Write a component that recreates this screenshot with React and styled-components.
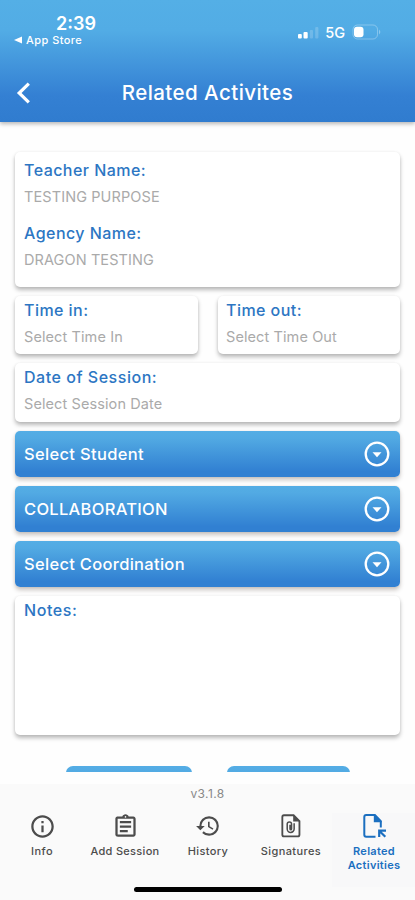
import React from "react";
import styled, { createGlobalStyle } from "styled-components";
import { MdInfoOutline, MdOutlineAssignment, MdHistory } from "react-icons/md";

const GlobalStyle = createGlobalStyle`
  * { box-sizing: border-box; }
  body { margin: 0; background: #fefefe; font-family: Inter, Roboto, sans-serif; }
`;

const blue = "linear-gradient(180deg, #54ade5 0%, #52aae3 15%, #3180d2 88%, #3180d2 100%)";

const Screen = styled.div`
  width: 415px;
  height: 900px;
  display: flex;
  flex-direction: column;
  overflow: hidden;
`;

const Header = styled.header`
  height: 122px;
  flex: none;
  color: #fff;
  background: linear-gradient(180deg, #54afe6 0%, #52ace5 25%, #3480d3 78%, #307ccf 100%);
  box-shadow: 0 2px 4px rgba(0, 0, 0, 0.28);
`;

const StatusBar = styled.div`
  height: 63px;
  display: flex;
  justify-content: space-between;
  padding: 14px 33px 0 14px;
`;

const ClockBlock = styled.div`
  width: 84px;
`;

const Clock = styled.div`
  padding-left: 42px;
  font-size: 18px;
  line-height: 20px;
  font-weight: 600;
`;

const BackToApp = styled.div`
  display: flex;
  align-items: center;
  gap: 4px;
  white-space: nowrap;
  font-size: 11px;
  line-height: 12px;
  font-weight: 500;
  letter-spacing: 0.45px;
`;

const Signals = styled.div`
  display: flex;
  align-items: center;
  height: 18px;
  margin-top: 9px;
`;

const Network = styled.span`
  font-size: 14.5px;
  font-weight: 500;
  margin: 0 7px 0 5px;
`;

const TitleBar = styled.div`
  height: 59px;
  display: grid;
  grid-template-columns: 48px 1fr 48px;
  align-items: center;
`;

const BackButton = styled.button`
  border: 0;
  background: none;
  padding: 0 0 0 15px;
  height: 24px;
  color: inherit;
  text-align: left;
`;

const Title = styled.h1`
  margin: 0;
  text-align: center;
  font-size: 20.5px;
  line-height: 26px;
  font-weight: 500;
  letter-spacing: 0.45px;
  white-space: nowrap;
`;

const Form = styled.main`
  flex: none;
  height: 650px;
  padding: 30px 15px 0;
  display: flex;
  flex-direction: column;
  gap: 9px;
  overflow: hidden;
`;

const Card = styled.section`
  flex: none;
  height: ${(p) => p.$height}px;
  padding: ${(p) => p.$top || 4}px 9px 0 ${(p) => p.$left || 9}px;
  border-radius: 5px;
  background: #fff;
  box-shadow: 0 3px 4px rgba(0, 0, 0, 0.27), 0 0 3px rgba(0, 0, 0, 0.06);
`;

const Pair = styled.div`
  display: grid;
  grid-template-columns: 183px 182px;
  justify-content: space-between;
`;

const FieldBox = styled.div`
  display: flex;
  flex-direction: column;
  gap: 7px;
  margin-bottom: 16px;
  white-space: nowrap;
`;

const Label = styled.div`
  color: #2c76c3;
  font-size: 16px;
  line-height: 20px;
  font-weight: 500;
  letter-spacing: ${(p) => p.$track || 0.45}px;
`;

const Value = styled.div`
  color: #aaa;
  font-size: 14.5px;
  line-height: 20px;
  letter-spacing: 0.1px;
`;

const SelectBar = styled.button`
  flex: none;
  height: 46px;
  border: 0;
  border-radius: 5px;
  padding: 0 10px 0 9px;
  display: flex;
  align-items: center;
  justify-content: space-between;
  background: ${blue};
  color: #fff;
  font: 500 16.5px/22px Inter, sans-serif;
  letter-spacing: ${(p) => p.$track}px;
  box-shadow: 0 3px 4px rgba(70, 50, 40, 0.28), 0 0 2px rgba(0, 0, 0, 0.1);
`;

const Actions = styled.div`
  display: flex;
  flex: none;
  gap: 35px;
  padding: 22px 0 0 51px;
`;

const Action = styled.button`
  flex: none;
  width: ${(p) => p.$width}px;
  height: 44px;
  border: 0;
  border-radius: 7px;
  background: ${blue};
`;

const Footer = styled.footer`
  margin-top: 12px;
  height: 116px;
  background: #fafafa;
  display: flex;
  flex-direction: column;
  align-items: center;
`;

const Version = styled.div`
  height: 29px;
  padding-top: 2px;
  color: #888;
  font-size: 12px;
  line-height: 16px;
  letter-spacing: 0.4px;
`;

const Tabs = styled.nav`
  display: grid;
  grid-template-columns: repeat(5, 83px);
  height: 74px;
`;

const Tab = styled.a`
  display: flex;
  flex-direction: column;
  align-items: center;
  padding-left: 1px;
  color: ${(p) => (p.$active ? "#1b6fc0" : "#4c4c4c")};
  background: ${(p) => (p.$active ? "#f8f8f9" : "transparent")};
  font-size: 11px;
  line-height: 14px;
  font-weight: ${(p) => (p.$active ? 600 : 500)};
  letter-spacing: ${(p) => p.$track}px;
  text-align: center;
`;

const TabIcon = styled.span`
  display: flex;
  align-items: center;
  height: 26px;
  margin-bottom: 5px;
`;

const HomeIndicator = styled.div`
  width: 148px;
  height: 5px;
  border-radius: 3px;
  background: #000;
`;

const ChevronIcon = () => (
  <svg width="18" height="24" viewBox="0 0 18 24" fill="none">
    <path d="M13.8 2.7 4.200 12l9.600 9.300" stroke="#fff" strokeWidth="3.2" />
  </svg>
);

const SignalIcon = () => (
  <svg width="22" height="13" viewBox="0 0 22 13" fill="#fff">
    <rect x="0" y="8" width="3.8" height="4.5" rx="1" />
    <rect x="5.5" y="6" width="4.2" height="6.5" rx="1" />
    <rect x="11.8" y="4" width="3.2" height="8.5" rx="1" opacity="0.18" />
    <rect x="17.2" y="1" width="3.2" height="11.5" rx="1" opacity="0.18" />
  </svg>
);

const BatteryIcon = () => (
  <svg width="30" height="16" viewBox="0 0 30 16">
    <rect x="1" y="1" width="24.5" height="14" rx="4.5" fill="none" stroke="#fff" strokeOpacity="0.3" />
    <rect x="2" y="2.8" width="9.5" height="10.4" rx="3" fill="#fff" />
    <path d="M27 5.5q2.6 2.5 0 5z" fill="#fff" opacity="0.35" />
  </svg>
);

const DropIcon = () => (
  <svg width="26" height="26" viewBox="0 0 26 26">
    <circle cx="13" cy="13" r="11.3" fill="none" stroke="#fff" strokeWidth="2.3" />
    <path d="M8.5 11.2h9L13 16.2z" fill="#fff" />
  </svg>
);

const SignatureIcon = () => (
  <svg width="26" height="26" viewBox="0 0 24 24" fill="none" stroke="currentColor" strokeWidth="1.7">
    <path d="M5.5 2.1h8.9l5.4 5.4v12.6q0 1.5-1.5 1.5H5.5Q4 21.6 4 20.1V3.6Q4 2.1 5.5 2.1z" />
    <path d="M14 2.2 19.6 7.9H14z" fill="currentColor" stroke="none" />
    <path d="M14.900 9.500v5.200a3.200 3.200 0 0 1-6.400 0V10.200a2 2 0 0 1 4 0v4.600q0 .7-.7.700t-.7-.7v-4" strokeWidth="1.4" />
  </svg>
);

const RelatedIcon = () => (
  <svg width="26" height="26" viewBox="0 0 26 26" fill="none" stroke="currentColor">
    <path d="M14.500 23.700H5.200q-1.900 0-1.900-1.900V4q0-1.900 1.900-1.900h8.700l5.900 6v6.300" strokeWidth="2" />
    <path d="M12.800 2v7.200h7.900v-.8L14.300 2z" fill="currentColor" stroke="none" />
    <path d="M18.200 24v-6.300H25M18.700 18.200l5.600 5.500" strokeWidth="2.2" />
  </svg>
);

const Field = ({ label, value, labelTrack }) => (
  <FieldBox>
    <Label $track={labelTrack}>{label}</Label>
    {value && <Value>{value}</Value>}
  </FieldBox>
);

const selects = [
  ["Select Student", 0.33],
  ["COLLABORATION", 0.3],
  ["Select Coordination", 0.3],
];

const tabs = [
  ["Info", MdInfoOutline, 0.5, 27],
  ["Add Session", MdOutlineAssignment, 0.3, 27],
  ["History", MdHistory, 0.4, 26],
  ["Signatures", SignatureIcon, 0.4, 26],
];

export default function App() {
  return (
    <Screen>
      <GlobalStyle />
      <Header>
        <StatusBar>
          <ClockBlock>
            <Clock>2:39</Clock>
            <BackToApp>
              <svg width="8" height="8" viewBox="0 0 8 8">
                <path d="M8 .5v7L0 4z" fill="#fff" />
              </svg>
              App Store
            </BackToApp>
          </ClockBlock>
          <Signals>
            <SignalIcon />
            <Network>5G</Network>
            <BatteryIcon />
          </Signals>
        </StatusBar>
        <TitleBar>
          <BackButton aria-label="Back"><ChevronIcon /></BackButton>
          <Title>Related Activites</Title>
        </TitleBar>
      </Header>
      <Form>
        <Card $height={135} $top={8}>
          <Field label="Teacher Name:" value="TESTING PURPOSE" />
          <Field label="Agency Name:" value="DRAGON TESTING" />
        </Card>
        <Pair>
          <Card $height={58}><Field label="Time in:" value="Select Time In" /></Card>
          <Card $height={58} $left={8}><Field label="Time out:" value="Select Time Out" /></Card>
        </Pair>
        <Card $height={59}><Field label="Date of Session:" value="Select Session Date" labelTrack={0.53} /></Card>
        {selects.map(([text, track]) => (
          <SelectBar key={text} $track={track}>
            <span>{text}</span>
            <DropIcon />
          </SelectBar>
        ))}
        <Card $height={139}><Field label="Notes:" labelTrack={0.6} /></Card>
        <Actions>
          <Action $width={126} aria-label="Primary action" />
          <Action $width={123} aria-label="Secondary action" />
        </Actions>
      </Form>
      <Footer>
        <Version>v3.1.8</Version>
        <Tabs>
          {tabs.map(([text, Icon, track, size]) => (
            <Tab key={text} $track={track}>
              <TabIcon><Icon size={size} /></TabIcon>
              {text}
            </Tab>
          ))}
          <Tab $active $track={0.3}>
            <TabIcon><RelatedIcon /></TabIcon>
            <span>Related<br />Activities</span>
          </Tab>
        </Tabs>
        <HomeIndicator />
      </Footer>
    </Screen>
  );
}
